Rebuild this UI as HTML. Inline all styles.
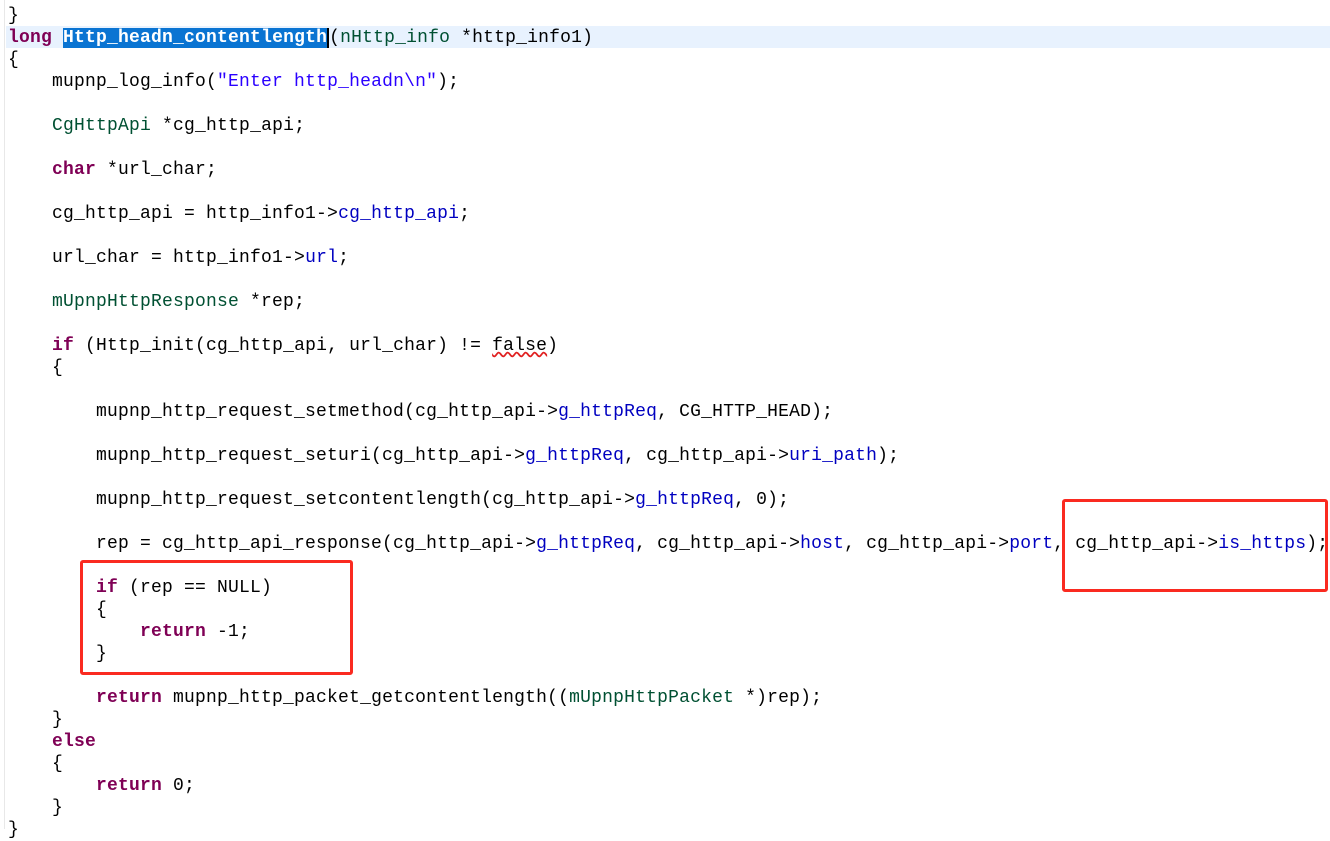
<!DOCTYPE html>
<html><head><meta charset="utf-8"><style>
body{margin:0;width:1330px;height:829px;background:#fff;overflow:hidden;position:relative;font-family:"Liberation Mono",monospace;}
.g{position:absolute;left:4px;top:0;width:1px;height:829px;background:#e8e8e8}
.code{position:absolute;left:8px;top:5px;font-size:18px;letter-spacing:0.2px;line-height:22px;white-space:pre;color:#000}
.k{color:#7f0055;font-weight:bold}
.t{color:#005032}
.s{color:#2a00ff}
.f{color:#0000c0}
.hl{position:absolute;left:6px;top:26px;width:1324px;height:22px;background:#e8f2fe}
.sel{background:#0a74d2;color:#fff;font-weight:bold}
.cur{border-left:2px solid #000}
.sq{text-decoration:underline wavy #e02020;text-decoration-skip-ink:none}
.box{position:absolute;border:3px solid #fa2a20;border-radius:3px}
</style></head><body>
<div class="g"></div>
<div class="hl"></div>
<div class="code">}
<span class="k">long</span> <span class="sel">Http_headn_contentlength</span><span class="cur"></span>(<span class="t">nHttp_info</span> *http_info1)
{
    mupnp_log_info(<span class="s">"Enter http_headn\n"</span>);

    <span class="t">CgHttpApi</span> *cg_http_api;

    <span class="k">char</span> *url_char;

    cg_http_api = http_info1-&gt;<span class="f">cg_http_api</span>;

    url_char = http_info1-&gt;<span class="f">url</span>;

    <span class="t">mUpnpHttpResponse</span> *rep;

    <span class="k">if</span> (Http_init(cg_http_api, url_char) != <span class="sq">false</span>)
    {

        mupnp_http_request_setmethod(cg_http_api-&gt;<span class="f">g_httpReq</span>, CG_HTTP_HEAD);

        mupnp_http_request_seturi(cg_http_api-&gt;<span class="f">g_httpReq</span>, cg_http_api-&gt;<span class="f">uri_path</span>);

        mupnp_http_request_setcontentlength(cg_http_api-&gt;<span class="f">g_httpReq</span>, 0);

        rep = cg_http_api_response(cg_http_api-&gt;<span class="f">g_httpReq</span>, cg_http_api-&gt;<span class="f">host</span>, cg_http_api-&gt;<span class="f">port</span>, cg_http_api-&gt;<span class="f">is_https</span>);

        <span class="k">if</span> (rep == NULL)
        {
            <span class="k">return</span> -1;
        }

        <span class="k">return</span> mupnp_http_packet_getcontentlength((<span class="t">mUpnpHttpPacket</span> *)rep);
    }
    <span class="k">else</span>
    {
        <span class="k">return</span> 0;
    }
}</div>
<div class="box" style="left:80px;top:560px;width:267px;height:109px"></div>
<div class="box" style="left:1062px;top:499px;width:260px;height:87px"></div>
</body></html>
